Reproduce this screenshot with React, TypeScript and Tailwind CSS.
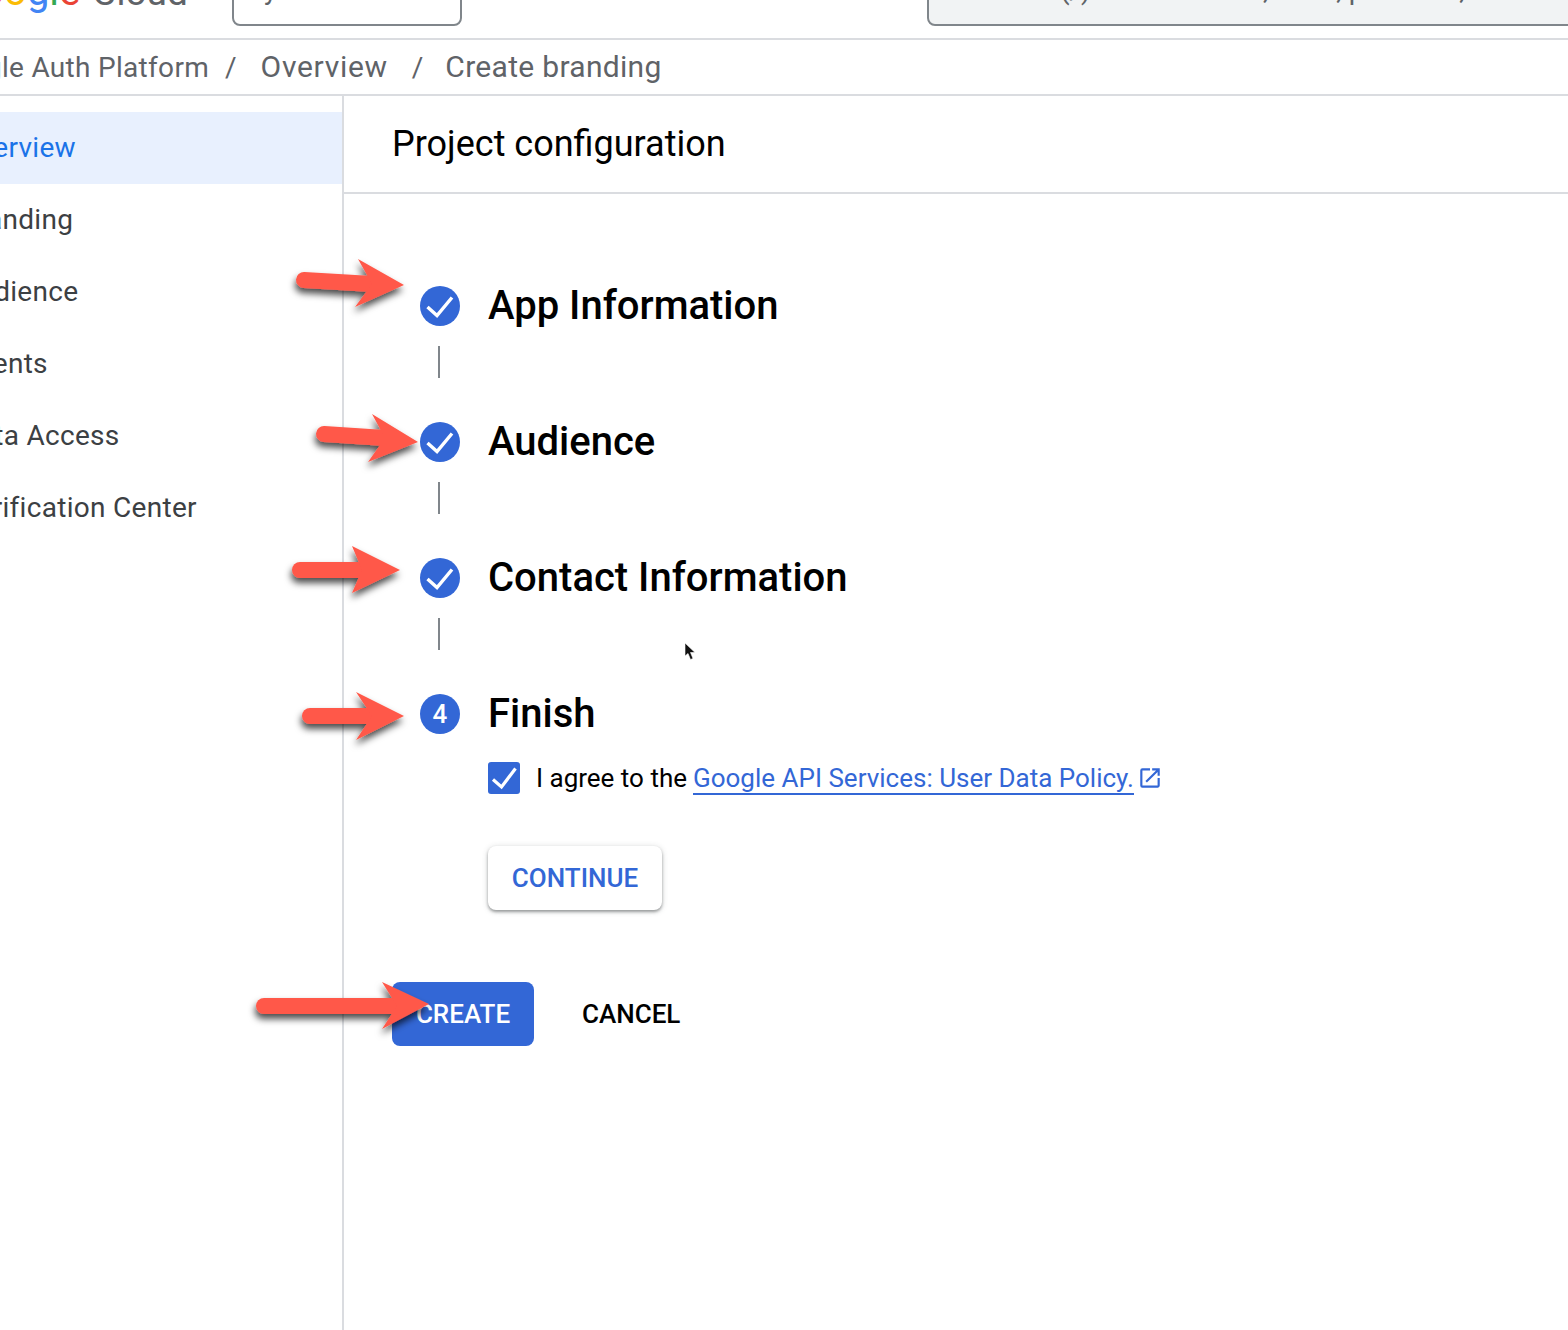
import React from 'react';

function CheckCircle() {
  return (
    <div className="h-10 w-10 shrink-0 rounded-full bg-[#3367d6]">
      <svg width="40" height="40" viewBox="0 0 40 40" fill="none">
        <path d="M7.5 21 L17 29.5 L32 11.5" stroke="white" strokeWidth="3.4" />
      </svg>
    </div>
  );
}

// red annotation arrows sit on top of the screenshot
const arrows = [
  { tail: [304, 280], neck: [372, 284], wingTop: [358, 259], wingBottom: [355, 307], tip: [404, 285] },
  { tail: [324, 434], neck: [385, 438], wingTop: [372, 414], wingBottom: [368, 462], tip: [418, 442] },
  { tail: [300, 570], neck: [362, 570], wingTop: [352, 546], wingBottom: [352, 593], tip: [400, 570] },
  { tail: [310, 716], neck: [372, 716], wingTop: [356, 692], wingBottom: [356, 740], tip: [404, 716] },
  { tail: [264, 1006], neck: [397, 1006], wingTop: [382, 982], wingBottom: [382, 1029], tip: [429, 1004] },
];

function Arrows() {
  return (
    <svg className="absolute left-0 top-0 pointer-events-none" width="1568" height="1330" viewBox="0 0 1568 1330" fill="none">
      <defs>
        <filter id="arrow-shadow" x="-20%" y="-40%" width="140%" height="200%">
          <feDropShadow dx="-1" dy="5" stdDeviation="3.5" floodColor="#000" floodOpacity="0.7" />
        </filter>
      </defs>
      {arrows.map((a, i) => (
        <g key={i} filter="url(#arrow-shadow)">
          <line x1={a.tail[0]} y1={a.tail[1]} x2={a.neck[0]} y2={a.neck[1]} stroke="#ff5849" strokeWidth="16" strokeLinecap="round" />
          <polygon points={`${a.wingTop[0]},${a.wingTop[1]} ${a.tip[0]},${a.tip[1]} ${a.wingBottom[0]},${a.wingBottom[1]} ${a.neck[0]},${a.neck[1]}`} fill="#ff5849" />
        </g>
      ))}
      {/* mouse pointer */}
      <path d="M685 643 L685 656 L688 653.5 L690.5 659.5 L693 658.5 L690.5 652.5 L695 652.5 Z" fill="#111" stroke="#fff" strokeWidth="0.6" />
    </svg>
  );
}

const navItems = ['Overview', 'Branding', 'Audience', 'Clients', 'Data Access', 'Verification Center'];

function StepTitle({ children }: { children: React.ReactNode }) {
  return <div className="text-[40px] font-medium leading-[40px] text-black whitespace-nowrap">{children}</div>;
}

function Connector() {
  return <div className="ml-[18px] mb-[44px] mt-5 h-8 w-0.5 bg-[#80868b]" />;
}

export default function App() {
  return (
    <div className="relative h-[1330px] w-[1568px] overflow-hidden bg-white font-['Roboto',sans-serif]">
      {/* top bar, only its lower edge is in the shot */}
      <div className="relative h-10 overflow-hidden border-b-2 border-[#dadce0]">
        <div className="absolute left-0 top-[-24px] whitespace-nowrap text-[40px] leading-[32px]">
          <span className="ml-[-46px] inline-block">
            <span className="text-[#4285f4]">G</span>
            <span className="text-[#ea4335]">o</span>
            <span className="text-[#fbbc04]">o</span>
            <span className="text-[#4285f4]">g</span>
            <span className="text-[#34a853]">l</span>
            <span className="text-[#ea4335]">e</span>
          </span>
          <span className="ml-3 text-[37px] text-[#5f6368]">Cloud</span>
        </div>
        <div className="absolute left-[232px] top-[-20px] h-[46px] w-[230px] rounded-lg border-2 border-[#80868b] bg-white">
          <span className="absolute left-[30px] top-[-6px] text-[28px] leading-[28px] text-[#5f6368]">y</span>
        </div>
        <div className="absolute left-[927px] top-[-20px] h-[46px] w-[680px] rounded-lg border-2 border-[#80868b] bg-[#f1f3f4]">
          <span className="absolute left-[38px] top-[-6px] whitespace-nowrap text-[28px] leading-[28px] text-[#5f6368]">Search (/) for resources, docs, products, and more</span>
        </div>
      </div>

      {/* breadcrumb */}
      <div className="flex h-[56px] items-center border-b-2 border-[#dadce0] pb-0.5 text-[30px] text-[#5f6368] whitespace-nowrap">
        <div className="ml-[-66px] flex items-baseline">
          <span className="text-[28px] tracking-[0.3px]">Google Auth Platform</span>
          <span className="ml-4 text-[28px]">/</span>
          <span className="ml-6 tracking-[0.7px]">Overview</span>
          <span className="ml-6 text-[28px]">/</span>
          <span className="ml-[22px] tracking-[0.3px]">Create branding</span>
        </div>
      </div>

      <div className="flex h-[1234px]">
        {/* left nav */}
        <div className="w-[344px] shrink-0 overflow-hidden border-r-2 border-[#dadce0] pt-4">
          {navItems.map((item, i) => (
            <div key={item} className={`flex h-[72px] items-center whitespace-nowrap text-[28px] tracking-[0.3px] ${i === 0 ? 'bg-[#e8f0fe] text-[#1a73e8]' : 'text-[#3c4043]'}`}>
              <span className="ml-[-40px]">{item}</span>
            </div>
          ))}
        </div>

        <div className="flex-1">
          <div className="flex h-[98px] items-center border-b-2 border-[#dadce0] pl-12 text-[36px] text-black">Project configuration</div>

          <div className="pl-12 pt-[92px]">
            <div className="ml-7">
              <div className="flex items-center gap-7">
                <CheckCircle />
                <StepTitle>App Information</StepTitle>
              </div>
              <Connector />
              <div className="flex items-center gap-7">
                <CheckCircle />
                <StepTitle>Audience</StepTitle>
              </div>
              <Connector />
              <div className="flex items-center gap-7">
                <CheckCircle />
                <StepTitle>Contact Information</StepTitle>
              </div>
              <Connector />
              <div className="flex items-center gap-7">
                <div className="flex h-10 w-10 shrink-0 items-center justify-center rounded-full bg-[#3367d6] text-[26px] font-medium text-white">4</div>
                <StepTitle>Finish</StepTitle>
              </div>

              <div className="ml-[68px] mt-7 flex h-8 items-start gap-4">
                <div className="h-8 w-8 shrink-0 rounded-[3px] bg-[#3367d6]">
                  <svg width="32" height="32" viewBox="0 0 32 32" fill="none">
                    <path d="M5 17.5 L13.5 25 L27.5 6.5" stroke="white" strokeWidth="3.2" />
                  </svg>
                </div>
                <div className="flex items-start whitespace-nowrap pt-px text-[26px] leading-[30px] text-black">
                  <span>I agree to the</span>
                  <span className="ml-[6px] border-b-2 border-[#3367d6] text-[#3367d6]">Google API Services: User Data Policy.</span>
                  <svg className="ml-[3px] mt-[2px]" width="26" height="26" viewBox="0 0 24 24" fill="#3367d6">
                    <path d="M19 19H5V5h7V3H5a2 2 0 00-2 2v14a2 2 0 002 2h14c1.1 0 2-.9 2-2v-7h-2v7zM14 3v2h3.59l-9.83 9.83 1.41 1.41L19 6.41V10h2V3h-7z" />
                  </svg>
                </div>
              </div>

              <div className="ml-[68px] mt-[52px] flex h-16 w-[174px] items-center justify-center rounded-lg bg-white text-[26px] font-medium text-[#3367d6] shadow-[0_2px_3px_rgba(60,64,67,0.45),0_1px_6px_rgba(60,64,67,0.2)]">CONTINUE</div>
            </div>

            <div className="mt-[72px] flex items-center gap-12">
              <div className="flex h-16 w-[142px] items-center justify-center rounded-lg bg-[#3367d6] text-[26px] font-medium text-white">CREATE</div>
              <div className="text-[26px] font-medium text-black">CANCEL</div>
            </div>
          </div>
        </div>
      </div>

      <Arrows />
    </div>
  );
}
